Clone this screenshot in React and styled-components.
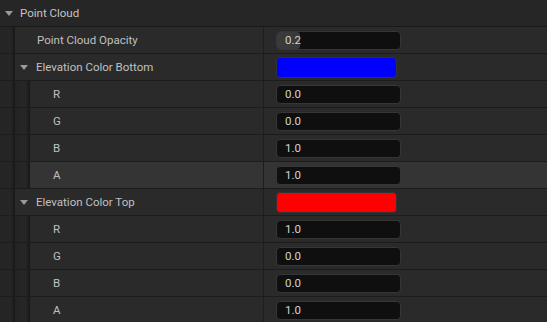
import React from "react";
import styled, { createGlobalStyle } from "styled-components";

const GlobalStyle = createGlobalStyle`
  html, body {
    margin: 0;
    padding: 0;
    background: #282828;
    overflow: hidden;
  }
  body {
    font-family: Roboto, "Liberation Sans", sans-serif;
  }
`;

const Panel = styled.div`
  width: 547px;
  height: 322px;
  background: #282828;
  overflow: hidden;
`;

const HeaderRow = styled.div`
  display: flex;
  align-items: center;
  height: 26px;
  border-bottom: 1px solid #1a1a1a;
  background: #262626;
  padding-left: 5px;
  color: #c4c4c4;
  font-size: 11.5px;
  gap: 7px;
`;

const Row = styled.div`
  display: flex;
  height: 26px;
  border-bottom: 1px solid #1c1c1c;
  background: ${(p) => (p.$hover ? "#343434" : "#2a2a2a")};
`;

const Gutter = styled.div`
  width: 15px;
  flex: none;
  background: linear-gradient(
    to right,
    #242424 0px,
    #262626 11px,
    #1e1e1e 13px,
    #171717 15px
  );
`;

const NameCell = styled.div`
  display: flex;
  align-items: center;
  width: ${(p) => 264 - p.$depth * 15}px;
  flex: none;
  padding-left: ${(p) => (p.$expandable ? 5 : p.$depth > 1 ? 23 : 22)}px;
  box-sizing: border-box;
  border-right: 1px solid #1e1e1e;
  color: #c0c0c0;
  font-size: 11.5px;
  gap: 8px;
  padding-bottom: 1px;
`;

const ValueCell = styled.div`
  display: flex;
  align-items: center;
  padding-left: 12px;
`;

const Arrow = styled.span`
  width: 0;
  height: 0;
  border-left: 4.5px solid transparent;
  border-right: 4.5px solid transparent;
  border-top: 5px solid #9a9a9a;
  margin-top: 1px;
`;

const Input = styled.div`
  position: relative;
  width: 125px;
  height: 19px;
  box-sizing: border-box;
  background: #0f0f0f;
  border: 1px solid #363636;
  border-radius: 4px;
  display: flex;
  align-items: center;
  padding-left: 8px;
  color: #d2d2d2;
  font-size: 11.5px;
  overflow: hidden;
`;

const SliderFill = styled.div`
  position: absolute;
  left: 0;
  top: 0;
  bottom: 0;
  background: #3a3a3a;
  border-radius: 0 3px 3px 0;
`;

const Value = styled.span`
  position: relative;
`;

const Swatch = styled.div`
  width: 121px;
  height: 21px;
  box-sizing: border-box;
  border-radius: 4px;
  border: 1px solid #333;
  background: ${(p) => p.$color};
`;

const Gutters = ({ depth }) =>
  Array.from({ length: depth }).map((_, i) => <Gutter key={i} />);

function NumberRow({ depth, label, value, hover, fill }) {
  return (
    <Row $hover={hover}>
      <Gutters depth={depth} />
      <NameCell $depth={depth}>{label}</NameCell>
      <ValueCell>
        <Input>
          {fill != null && <SliderFill style={{ width: fill }} />}
          <Value>{value}</Value>
        </Input>
      </ValueCell>
    </Row>
  );
}

function ColorGroup({ label, color, values, hover }) {
  return (
    <>
      <Row>
        <Gutters depth={1} />
        <NameCell $depth={1} $expandable>
          <Arrow />
          {label}
        </NameCell>
        <ValueCell>
          <Swatch $color={color} />
        </ValueCell>
      </Row>
      {["R", "G", "B", "A"].map((c, i) => (
        <NumberRow
          key={c}
          depth={2}
          label={c}
          value={values[i]}
          hover={hover === c}
        />
      ))}
    </>
  );
}

export default function App() {
  return (
    <Panel>
      <GlobalStyle />
      <HeaderRow>
        <Arrow />
        <span>Point Cloud</span>
      </HeaderRow>
      <NumberRow depth={1} label="Point Cloud Opacity" value="0.2" fill={23} />
      <ColorGroup
        label="Elevation Color Bottom"
        color="#0000ff"
        values={["0.0", "0.0", "1.0", "1.0"]}
        hover="A"
      />
      <ColorGroup
        label="Elevation Color Top"
        color="#ff0000"
        values={["1.0", "0.0", "0.0", "1.0"]}
      />
    </Panel>
  );
}
